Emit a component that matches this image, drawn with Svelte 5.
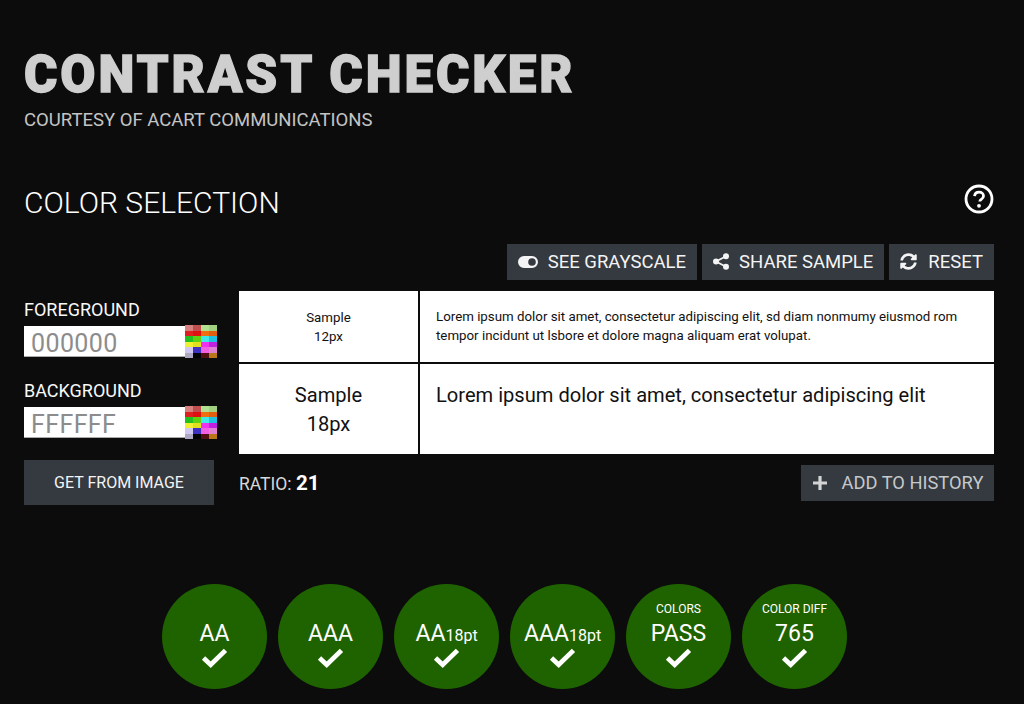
<script>
  const swatchRows = [
    ['#d88080','#c05050','#b0e090','#a0d080'],
    ['#e02020','#e01010','#f07010','#e06010'],
    ['#20c020','#60d010','#40e8e8','#20c0e0'],
    ['#f0f030','#e0e020','#f030f0','#c020e0'],
    ['#d0c8f0','#4030c0','#f060e0','#e080d0'],
    ['#b0a8c0','#000','#501010','#b87818']
  ];
  const badges = [
    { main: 'AA' },
    { main: 'AAA' },
    { main: 'AA', sub: '18pt' },
    { main: 'AAA', sub: '18pt' },
    { top: 'COLORS', main: 'PASS' },
    { top: 'COLOR DIFF', main: '765' }
  ];
</script>

{#snippet palette()}
  <div class="palette" aria-hidden="true">
    {#each swatchRows as row}
      {#each row as c}
        <span style="background:{c}"></span>
      {/each}
    {/each}
  </div>
{/snippet}

<main>
  <header>
    <h1>CONTRAST CHECKER</h1>
    <p class="courtesy">COURTESY OF ACART COMMUNICATIONS</p>
  </header>

  <div class="section-head">
    <h2>COLOR SELECTION</h2>
    <svg class="help" viewBox="0 0 30 30" width="30" height="30">
      <circle cx="15" cy="15" r="13" fill="none" stroke="#fff" stroke-width="2.8"/>
      <path d="M10.6 12.2c.2-2.6 2-4 4.5-4 2.500 0 4.400 1.500 4.400 3.700 0 1.700-1 2.600-2.200 3.400-1.100.7-1.500 1.200-1.500 2.300" fill="none" stroke="#fff" stroke-width="2.800"/>
      <circle cx="15" cy="21.800" r="1.900" fill="#fff"/>
    </svg>
  </div>

  <div class="actions">
    <button class="btn">
      <svg viewBox="0 0 20 12" width="20" height="12"><path fill-rule="evenodd" d="M6 0h8a6 6 0 0 1 0 12H6A6 6 0 0 1 6 0zm8 2.200a3.800 3.800 0 1 0 0 7.600 3.800 3.800 0 0 0 0-7.600z" fill="#f4f4f4"/></svg>
      SEE GRAYSCALE
    </button>
    <button class="btn">
      <svg viewBox="0 0 16 17" width="16" height="17"><g fill="#f4f4f4"><circle cx="13" cy="3.200" r="3"/><circle cx="3" cy="8.500" r="3"/><circle cx="13" cy="13.800" r="3"/></g><path d="M13 3.200 3 8.500l10 5.300" fill="none" stroke="#f4f4f4" stroke-width="1.800"/></svg>
      SHARE SAMPLE
    </button>
    <button class="btn reset">
      <svg viewBox="0 0 512 512" width="17" height="17"><path fill="#f4f4f4" d="M370.720 133.280C339.458 104.008 298.888 87.962 255.848 88c-77.458.068-144.328 53.178-162.791 126.850-1.344 5.363-6.122 9.150-11.651 9.150H24.103c-7.498 0-13.194-6.807-11.807-14.176C33.933 94.924 134.813 8 256 8c66.448 0 126.791 26.136 171.315 68.685L463.030 40.970C478.149 25.851 504 36.559 504 57.941V192c0 13.255-10.745 24-24 24H345.941c-21.382 0-32.090-25.851-16.971-40.971l41.750-41.749zM32 296h134.059c21.382 0 32.090 25.851 16.971 40.971l-41.750 41.750c31.262 29.273 71.835 45.319 114.876 45.280 77.418-.070 144.315-53.144 162.787-126.849 1.344-5.363 6.122-9.150 11.651-9.150h57.304c7.498 0 13.194 6.807 11.807 14.176C478.067 417.076 377.187 504 256 504c-66.448 0-126.791-26.136-171.315-68.685L48.970 471.030C33.851 486.149 8 475.441 8 454.059V320c0-13.255 10.745-24 24-24z"/></svg>
      RESET
    </button>
  </div>

  <div class="workspace">
    <aside>
      <label for="fg">FOREGROUND</label>
      <div class="field">
        <input id="fg" value="000000" />
        {@render palette()}
      </div>
      <label for="bg">BACKGROUND</label>
      <div class="field">
        <input id="bg" value="FFFFFF" />
        {@render palette()}
      </div>
      <button class="btn image">GET FROM IMAGE</button>
    </aside>

    <section>
      <div class="samples">
        <div class="cell small c">Sample<br />12px</div>
        <div class="cell small t">Lorem ipsum dolor sit amet, consectetur adipiscing elit, sd diam nonmumy eiusmod rom tempor incidunt ut lsbore et dolore magna aliquam erat volupat.</div>
        <div class="cell large c">Sample<br />18px</div>
        <div class="cell large t">Lorem ipsum dolor sit amet, consectetur adipiscing elit</div>
      </div>
      <div class="result">
        <div class="ratio">RATIO: <b>21</b></div>
        <button class="btn add">
          <svg viewBox="0 0 16 16" width="16" height="16"><path d="M8 1v14M1 8h14" stroke="#d4d4d4" stroke-width="3.200" fill="none"/></svg>
          ADD TO HISTORY
        </button>
      </div>
    </section>
  </div>

  <div class="badges">
    {#each badges as b}
      <div class="badge">
        {#if b.top}<div class="top">{b.top}</div>{/if}
        <div class="main">{b.main}{#if b.sub}<span class="sub">{b.sub}</span>{/if}</div>
        <svg viewBox="0 0 28 22" width="27" height="21"><path d="M2.500 11.500 10 18.500 25.500 3.500" fill="none" stroke="#fff" stroke-width="5"/></svg>
      </div>
    {/each}
  </div>
</main>

<style>
  :global(body) {
    margin: 0;
    background: #0c0c0d;
    font-family: Roboto, "Liberation Sans", sans-serif;
    color: #fff;
  }
  main {
    width: 1024px;
    height: 704px;
    box-sizing: border-box;
    padding: 46px 30px 0 24px;
    overflow: hidden;
  }
  h1 {
    margin: 0;
    font-size: 51px;
    line-height: 58px;
    font-weight: 900;
    color: #cfcfcf;
    letter-spacing: 2.900px;
    -webkit-text-stroke: 1.300px #cfcfcf;
    white-space: nowrap;
  }
  .courtesy {
    margin: 5px 0 0;
    font-size: 18.500px;
    line-height: 22px;
    color: #c4c4c4;
  }
  .section-head {
    display: flex;
    justify-content: space-between;
    align-items: flex-start;
    margin-top: 53px;
    height: 36px;
  }
  h2 {
    margin: 0;
    font-size: 30px;
    line-height: 38px;
    font-weight: 300;
  }
  .actions {
    display: flex;
    justify-content: flex-end;
    gap: 5px;
    margin-top: 24px;
  }
  .btn {
    display: flex;
    align-items: center;
    justify-content: center;
    gap: 10px;
    height: 36px;
    padding: 0 11px 1px;
    border: 0;
    background: #343a40;
    color: #f4f4f4;
    font: 400 18.500px Roboto, "Liberation Sans", sans-serif;
    white-space: nowrap;
  }
  .btn svg { flex: none; }
  .reset { gap: 11px; }
  .workspace {
    display: flex;
    gap: 25px;
    margin-top: 11px;
  }
  aside {
    width: 190px;
    flex: none;
    display: flex;
    flex-direction: column;
  }
  label {
    font-size: 18px;
    line-height: 22px;
    margin-top: 8px;
    color: #f8f8f8;
  }
  label + .field { margin-top: 4px; }
  .field {
    display: flex;
    height: 33px;
    width: 194px;
    margin-bottom: 14px;
  }
  input {
    width: 161px;
    height: 31px;
    margin-top: 1px;
    box-sizing: border-box;
    border: 0;
    border-bottom: 1px solid #aaa;
    padding: 4px 7px 0;
    background: #fff;
    color: #8c8c8c;
    font: 400 25px Roboto, "Liberation Sans", sans-serif;
    letter-spacing: 0.400px;
    outline: none;
  }
  .palette {
    display: grid;
    grid-template-columns: repeat(4, 8px);
    grid-template-rows: repeat(6, 5.500px);
    filter: blur(0.600px);
    height: 33px;
    width: 33px;
  }
  .image {
    width: 190px;
    height: 45px;
    padding: 0;
    font-size: 16px;
    margin-top: 7px;
  }
  section { flex: 1; }
  .samples {
    display: grid;
    grid-template-columns: 179px 1fr;
    grid-template-rows: 71px 90px;
    gap: 2px;
    background: #0c0c0d;
    color: #111;
  }
  .cell { background: #fff; }
  .c {
    display: flex;
    align-items: center;
    justify-content: center;
    text-align: center;
  }
  .small { font-size: 13.300px; line-height: 19px; }
  .large { font-size: 20.100px; line-height: 29px; }
  .large.c { padding-top: 2px; box-sizing: border-box; }
  .t { padding: 16px 16px 0; }
  .large.t { padding-top: 17px; }
  .result {
    display: flex;
    justify-content: space-between;
    margin-top: 11px;
  }
  .ratio {
    font-size: 17.500px;
    line-height: 36px;
    color: #d8d8d8;
  }
  .ratio b { font-size: 20.500px; color: #fff; }
  .add { color: #c6c8ca; gap: 14px; width: 193px; box-sizing: border-box; font-size: 18.300px; }
  .badges {
    display: flex;
    gap: 11px;
    margin-top: 79px;
    padding-left: 138px;
  }
  .badge {
    position: relative;
    width: 105px;
    height: 105px;
    flex: none;
    border-radius: 50%;
    background: #1f6300;
    text-align: center;
  }
  .main {
    position: absolute;
    left: 0;
    right: 0;
    top: 37px;
    font-size: 23px;
    line-height: 26px;
    white-space: nowrap;
  }
  .sub { font-size: 16px; }
  .top {
    position: absolute;
    left: 0;
    right: 0;
    top: 18px;
    font-size: 12px;
    line-height: 14px;
  }
  .badge svg {
    position: absolute;
    left: 39px;
    top: 63px;
  }
</style>
